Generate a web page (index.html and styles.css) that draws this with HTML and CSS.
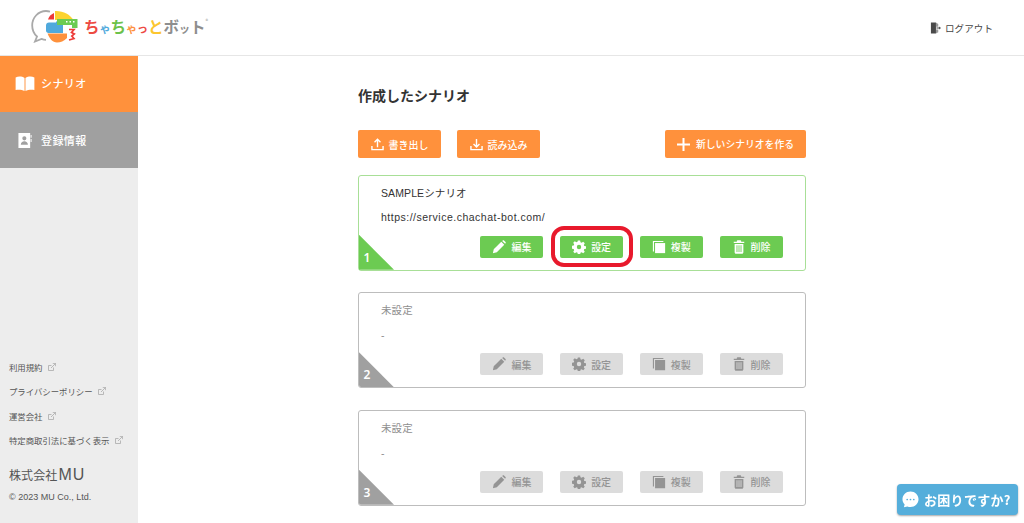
FILE: index.html
```html
<!DOCTYPE html>
<html lang="ja">
<head>
<meta charset="utf-8">
<title>ちゃちゃっとボット</title>
<link rel="stylesheet" href="styles.css">
</head>
<body>
<svg class="sprite" aria-hidden="true">
  <defs>
    <symbol id="i-edit" viewBox="0 0 16 16"><path fill="currentColor" d="M1 15l1-4.500L10.600 2l3.400 3.400L5.500 14z M11.600 1l1-.6c.4-.2.8-.2 1.100.1l1.800 1.800c.3.3.3.7.1 1.100l-.6 1z"/></symbol>
    <symbol id="i-gear" viewBox="0 0 16 16"><path fill="currentColor" fill-rule="evenodd" d="M6.700 .5h2.600l.4 2 1.300.6 1.800-1.100 1.800 1.800-1.100 1.800.6 1.300 2 .4v2.600l-2 .4-.6 1.300 1.100 1.800-1.800 1.800-1.800-1.100-1.300.6-.4 2H6.700l-.4-2-1.300-.6-1.800 1.100-1.800-1.800 1.100-1.800-.6-1.300-2-.4V6.700l2-.4.6-1.300L1.400 3.200 3.200 1.400 5 2.500l1.300-.6zM8 5.500a2.500 2.500 0 1 0 0 5 2.500 2.500 0 0 0 0-5z"/></symbol>
    <symbol id="i-copy" viewBox="0 0 16 16"><path fill="currentColor" d="M3.500 3.500H15V15H3.500z"/><path fill="currentColor" d="M1 1h12v1.300H2.300V13H1z"/></symbol>
    <symbol id="i-trash" viewBox="0 0 16 16"><path fill="currentColor" fill-rule="evenodd" d="M5.500 1.500C5.500.7 6 .3 6.700.3h2.600c.7 0 1.200.4 1.200 1.200V2H14v1.500H2V2h3.500zM3 4.500h10V14c0 1-.6 1.700-1.600 1.700H4.600C3.600 15.700 3 15 3 14zM5.200 6v7.800h1V6zm2.300 0v7.800h1V6zm2.300 0v7.800h1V6z"/></symbol>
    <symbol id="i-ext" viewBox="0 0 8 8"><path fill="none" stroke="currentColor" stroke-width=".8" d="M5.500 4.500v3H.5v-5h3M3 5l4.500-4.500M4.800.4h2.800v2.800"/></symbol>
  </defs>
</svg>

<header class="topbar">
  <a class="brand">
    <svg class="brand-mark" viewBox="0 0 50 34" aria-hidden="true">
      <path fill="none" stroke="#a9a9a9" stroke-width="1.800" d="M15 30.800c-1.600 0-3-.3-4.500-.9L4 32.500l2-5C3 24.800 1.200 20.800 1.200 16.500 1.200 8.500 7.300 2 15 2c1.300 0 2.700.2 4 .6"/>
      <path fill="#fcd32f" d="M24 2c8-.4 15 3.500 18.500 9H24z"/>
      <path fill="#fe913c" d="M16.500 24.500H36V29c-3 3-6.500 4.500-10 4.500-4.500 0-7.500-4-9.500-9z"/>
      <path fill="#ed3a38" d="M23 4v6.500h-6c.8-3 3-5.200 6-6.500z"/>
      <path fill="none" stroke="#ed3a38" stroke-width="1.700" d="M38 20.500h5l-2.500 3 2.800 1.500-2.500 2 2.200 2.500-5 1.500"/>
      <path fill="#4fa9dc" d="M18 13.500h7v-1h2v3.500h5v8H17.500c-1.500 0-2.500-1-2.500-2.500v-5c0-1.800 1.200-3 3-3z"/>
      <path fill="#6ccb52" d="M26 10h20.500v9H41v-3H26z"/>
      <path fill="#fff" d="M35 12h1.500v1.500H35zm3.500 0H40v1.500h-1.500zm3.500 0h1.500v1.500H42z"/>
    </svg>
    <span class="brand-name"><span class="c-red">ち</span><span class="c-blue small">ゃ</span><span class="c-green">ち</span><span class="c-orange small">ゃ</span><span class="c-red small">っ</span><span class="c-yellow">と</span><span class="c-gray">ボ</span><span class="c-gray small">ッ</span><span class="c-gray">ト</span><sup class="reg">®</sup></span>
  </a>
  <a class="logout">
    <svg class="logout-icon" viewBox="0 0 12 13" aria-hidden="true"><path fill="#4a4a4a" d="M1 .5h5.500v12H1z"/><path fill="#9a9a9a" d="M6.500 .5L9 2v3H6.500zM6.500 8H9v3l-2.500 1.500z"/><path fill="#4a4a4a" d="M7 6h3V4.800L12 6.500l-2 1.700V7H7z"/></svg>
    ログアウト
  </a>
</header>

<div class="layout">
  <aside class="sidebar">
    <nav class="nav">
      <a class="nav-item is-active">
        <svg class="nav-icon nav-icon-book" viewBox="0 0 20 16" aria-hidden="true"><path fill="#fff" d="M0 1.500C3 .2 6.800.4 9.500 2v14C6.800 14.600 3 14.300 0 15zM20 1.500C17 .2 13.200.4 10.500 2v14c2.700-1.400 6.500-1.700 9.500-1z"/></svg>
        シナリオ
      </a>
      <a class="nav-item is-muted">
        <svg class="nav-icon nav-icon-card" viewBox="0 0 14 16" aria-hidden="true"><path fill="#fff" fill-rule="evenodd" d="M0 0h12.500v16H0zM6.300 3.500a2.200 2.200 0 1 0 0 4.400 2.200 2.200 0 0 0 0-4.400zM2.500 12.500h7.600c0-2.300-1.700-3.700-3.800-3.700s-3.800 1.400-3.800 3.700z"/><path fill="#fff" d="M13 2h1v3h-1zm0 4.500h1v3h-1z"/></svg>
        登録情報
      </a>
    </nav>
    <div class="side-foot">
      <ul class="side-links">
        <li><a>利用規約<svg class="ext"><use href="#i-ext"/></svg></a></li>
        <li><a>プライバシーポリシー<svg class="ext"><use href="#i-ext"/></svg></a></li>
        <li><a>運営会社<svg class="ext"><use href="#i-ext"/></svg></a></li>
        <li><a>特定商取引法に基づく表示<svg class="ext"><use href="#i-ext"/></svg></a></li>
      </ul>
      <p class="company">株式会社<span class="company-mu">MU</span></p>
      <p class="copyright">© 2023 MU Co., Ltd.</p>
    </div>
  </aside>

  <main class="main">
    <h1 class="title">作成したシナリオ</h1>
    <div class="toolbar">
      <button class="tool-btn">
        <svg class="tool-icon" viewBox="0 0 14 14" aria-hidden="true"><path fill="none" stroke="#fff" stroke-width="1.500" d="M1 8.500v4h12v-4M7 10V1.500M3.800 4.500L7 1.300l3.200 3.200"/></svg>
        書き出し
      </button>
      <button class="tool-btn">
        <svg class="tool-icon" viewBox="0 0 14 14" aria-hidden="true"><path fill="none" stroke="#fff" stroke-width="1.500" d="M1 8.500v4h12v-4M7 1v8.500M3.800 6.500L7 9.700l3.200-3.200"/></svg>
        読み込み
      </button>
      <button class="tool-btn tool-new">
        <svg class="tool-icon-plus" viewBox="0 0 13 13" aria-hidden="true"><path fill="#fff" d="M5.500 0h2v5.500H13v2H7.500V13h-2V7.500H0v-2h5.500z"/></svg>
        新しいシナリオを作る
      </button>
    </div>

    <section class="card card-on">
      <h2 class="card-name">SAMPLEシナリオ</h2>
      <p class="card-url">https://service.chachat-bot.com/</p>
      <div class="card-actions">
        <button class="act"><svg class="act-icon"><use href="#i-edit"/></svg>編集</button>
        <button class="act act-marked"><svg class="act-icon"><use href="#i-gear"/></svg>設定</button>
        <button class="act"><svg class="act-icon"><use href="#i-copy"/></svg>複製</button>
        <button class="act"><svg class="act-icon"><use href="#i-trash"/></svg>削除</button>
      </div>
      <span class="corner"></span><span class="corner-num">1</span>
    </section>

    <section class="card card-off">
      <h2 class="card-name">未設定</h2>
      <p class="card-url">-</p>
      <div class="card-actions">
        <button class="act"><svg class="act-icon"><use href="#i-edit"/></svg>編集</button>
        <button class="act"><svg class="act-icon"><use href="#i-gear"/></svg>設定</button>
        <button class="act"><svg class="act-icon"><use href="#i-copy"/></svg>複製</button>
        <button class="act"><svg class="act-icon"><use href="#i-trash"/></svg>削除</button>
      </div>
      <span class="corner"></span><span class="corner-num">2</span>
    </section>

    <section class="card card-off">
      <h2 class="card-name">未設定</h2>
      <p class="card-url">-</p>
      <div class="card-actions">
        <button class="act"><svg class="act-icon"><use href="#i-edit"/></svg>編集</button>
        <button class="act"><svg class="act-icon"><use href="#i-gear"/></svg>設定</button>
        <button class="act"><svg class="act-icon"><use href="#i-copy"/></svg>複製</button>
        <button class="act"><svg class="act-icon"><use href="#i-trash"/></svg>削除</button>
      </div>
      <span class="corner"></span><span class="corner-num">3</span>
    </section>
  </main>
</div>

<button class="help">
  <svg class="help-icon" viewBox="0 0 18 18" aria-hidden="true"><path fill="#fff" d="M9 .5c4.700 0 8.500 3.700 8.500 8.300S13.700 17 9 17c-1.200 0-2.300-.2-3.300-.7L2 17.300l.8-3C1.300 12.800.5 10.900.5 8.800.5 4.200 4.300.5 9 .5z"/><circle cx="5.500" cy="9" r=".9" fill="#55aedb"/><circle cx="9" cy="9" r=".9" fill="#55aedb"/><circle cx="12.500" cy="9" r=".9" fill="#55aedb"/></svg>
  お困りですか?
</button>
</body>
</html>
```
FILE: styles.css
```css
* { box-sizing: border-box; }
html, body { height: 523px; }
body {
  margin: 0;
  overflow: hidden;
  background: #fff;
  color: #333;
  font-family: "Noto Sans CJK JP", "Noto Sans", "Liberation Sans", sans-serif;
}
a { color: inherit; text-decoration: none; }
button { font-family: inherit; border: 0; cursor: pointer; padding: 0; }
.sprite { display: none; }

.topbar {
  height: 56px;
  display: flex;
  align-items: center;
  justify-content: space-between;
  padding: 0 31px 4px 31px;
  border-bottom: 1px solid #e6e6e6;
}
.brand { display: flex; align-items: center; gap: 3px; }
.brand-mark { width: 50px; height: 34px; display: block; }
.brand-name {
  font-size: 15.500px;
  font-weight: 700;
  line-height: 20px;
  white-space: nowrap;
  position: relative;
  top: 1px;
}
.brand-name .small { font-size: 11px; }
.c-red { color: #ed4a42; }
.c-blue { color: #4fa9dc; }
.c-green { color: #6cc24a; }
.c-orange { color: #fe913c; }
.c-yellow { color: #fcc62f; }
.c-gray { color: #8e8e8e; }
.reg { font-size: 5px; color: #aaa; vertical-align: 10px; line-height: 0; }
.logout {
  display: flex;
  align-items: center;
  gap: 4px;
  font-size: 9.500px;
  color: #444;
  letter-spacing: .1px;
  position: relative;
  top: 2px;
}
.logout-icon { width: 11px; height: 12px; }

.layout { display: flex; height: 467px; }
.sidebar {
  width: 138px;
  flex: none;
  background: #ededed;
  display: flex;
  flex-direction: column;
  justify-content: space-between;
}
.nav-item {
  height: 56px;
  display: flex;
  align-items: center;
  color: #fff;
  font-size: 11px;
  font-weight: 500;
  letter-spacing: .4px;
}
.nav-item.is-active { background: #ff913c; padding: 0 0 2px 15px; gap: 6px; }
.nav-item.is-muted { background: #a0a0a0; padding-left: 18px; gap: 9px; }
.nav-icon-book { width: 20px; height: 15px; }
.nav-icon-card { width: 14px; height: 15px; }

.side-foot { padding: 0 9px 20px; color: #555; }
.side-links { list-style: none; margin: 0 0 13.500px; padding: 0; }
.side-links li { height: 24.500px; display: flex; align-items: center; font-size: 8.400px; }
.side-links a { display: flex; align-items: center; gap: 5px; }
.ext { width: 8px; height: 8px; color: #aaa; }
.company { margin: 0; font-size: 12px; line-height: 18px; color: #555; letter-spacing: .1px; display: flex; align-items: center; }
.company-mu { font-family: "Liberation Sans", sans-serif; font-size: 16px; letter-spacing: 1px; margin-left: 1px; }
.copyright { margin: 7px 0 0; font-size: 9px; line-height: 12px; font-family: "Liberation Sans", sans-serif; color: #555; }

.main { flex: 1; padding: 0 0 0 220px; min-width: 0; }
.title { margin: 27px 0 0; height: 24px; width: 448px; font-size: 14px; font-weight: 700; line-height: 24px; color: #333; }
.toolbar { width: 448px; display: flex; gap: 16px; margin-top: 23px; }
.tool-btn {
  height: 28px;
  width: 83px;
  background: #ff913c;
  color: #fff;
  border-radius: 2px;
  font-size: 10px;
  font-weight: 500;
  display: flex;
  align-items: center;
  justify-content: center;
  gap: 5px;
}
.tool-icon { width: 13px; height: 13px; }
.tool-icon-plus { width: 13px; height: 13px; }
.tool-new { width: 141px; margin-left: auto; gap: 6px; font-size: 9.800px; }

.card {
  width: 448px;
  height: 96px;
  margin-top: 21.500px;
  padding: 8px 22.500px 0 22px;
  border-radius: 3px;
  border: 1.500px solid;
  position: relative;
  overflow: hidden;
  background: #fff;
}
.toolbar + .card { margin-top: 16.800px; }
.card-name { margin: 0; font-family: "Liberation Sans", "Noto Sans CJK JP", sans-serif; font-size: 10.500px; font-weight: 400; line-height: 18px; letter-spacing: .1px; }
.card-url { margin: 6px 0 0; font-size: 10.500px; line-height: 18px; font-family: "Liberation Sans", sans-serif; letter-spacing: .5px; }
.card-actions { display: flex; justify-content: flex-end; gap: 16.700px; margin-top: 10px; }
.act {
  width: 63px;
  height: 22px;
  border-radius: 2px;
  font-size: 10px;
  font-weight: 500;
  display: flex;
  align-items: center;
  justify-content: center;
  gap: 5px;
}
.act-icon { width: 14px; height: 14px; }
.corner { position: absolute; left: 0; bottom: 0; width: 35px; height: 35px; clip-path: polygon(0 0, 100% 100%, 0 100%); }
.corner-num { position: absolute; left: 4.500px; bottom: 5px; color: #fff; font-size: 12px; line-height: 14px; font-family: "Noto Sans", sans-serif; font-weight: 600; }

.card-on { border-color: #a8df97; color: #333; }
.card-on .act { background: #6ccb52; color: #fff; }
.card-on .corner { background: #6ccb52; }
.card-off { border-color: #bdbdbd; color: #8f8f8f; }
.card-off .card-url { margin-top: 7px; }
.card-off .card-actions { margin-top: 9px; }
.card-off .act { background: #dcdcdc; color: #949494; }
.card-off .corner { background: #a0a0a0; }

.card.card-on { overflow: visible; }
.act-marked { position: relative; }
.act-marked::after {
  content: "";
  position: absolute;
  inset: -10px -10px -9px -9px;
  border: 4px solid #e8192c;
  border-radius: 13px;
}

.help {
  position: fixed;
  left: 897px;
  top: 484px;
  width: 121px;
  height: 31px;
  background: #55aedb;
  color: #fff;
  border-radius: 4px;
  box-shadow: 0 1px 2px rgba(0,0,0,.35);
  font-size: 13px;
  font-weight: 700;
  display: flex;
  align-items: center;
  gap: 5px;
  padding-left: 5px;
  letter-spacing: .3px;
  white-space: nowrap;
}
.help-icon { width: 17px; height: 17px; flex: none; }
```
